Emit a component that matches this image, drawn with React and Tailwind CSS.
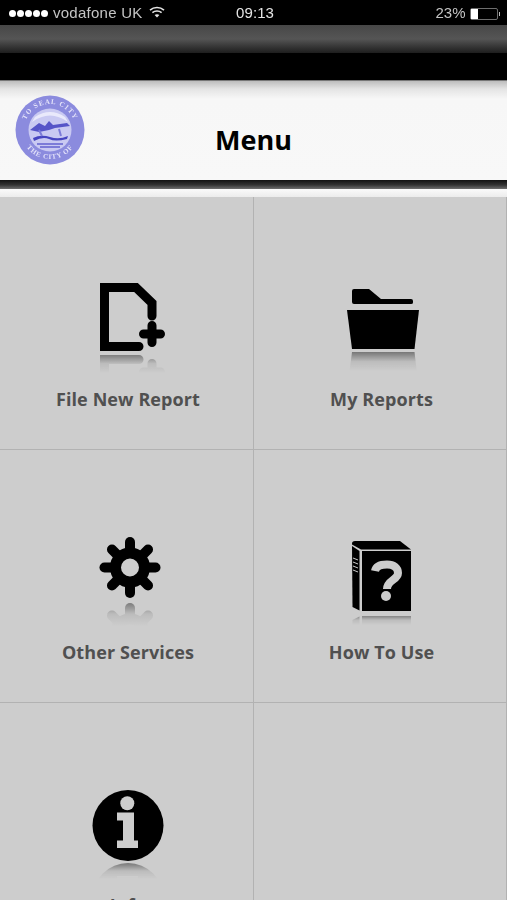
import React from 'react';

const GREY = '#cdcdcd';

// icon plus its faded mirror image below it
function Reflected({ id, axis, from, to, children }) {
  return (
    <svg viewBox="0 0 80 100" className="h-[100px] w-[80px] shrink-0 blur-[0.3px]">
      <defs>
        <linearGradient id={`${id}-grad`} gradientUnits="userSpaceOnUse" x1="0" y1={from} x2="0" y2={to}>
          <stop offset="0" stopColor="#fff" stopOpacity="0.42" />
          <stop offset="0.5" stopColor="#fff" stopOpacity="0.08" />
          <stop offset="1" stopColor="#fff" stopOpacity="0" />
        </linearGradient>
        <mask id={`${id}-mask`} maskUnits="userSpaceOnUse" x="0" y="0" width="80" height="100">
          <rect x="0" y={from} width="80" height={to - from} fill={`url(#${id}-grad)`} />
        </mask>
      </defs>
      <g mask={`url(#${id}-mask)`}>
        <g transform={`translate(0 ${axis * 2}) scale(1 -1)`}>{children}</g>
      </g>
      {children}
    </svg>
  );
}

function FileIcon() {
  return (
    <Reflected id="file" axis={78} from={79} to={98}>
      <path d="M52 71.5H17.5V12.5H49L65 28V41" fill="none" stroke="#000" strokeWidth="9" strokeLinecap="round" strokeLinejoin="miter" />
      <path d="M65 50.5V67.5M56.5 59H73.5" fill="none" stroke="#000" strokeWidth="9" strokeLinecap="round" />
    </Reflected>
  );
}

function FolderIcon() {
  return (
    <Reflected id="folder" axis={75.5} from={77} to={96}>
      <path d="M12 16Q12 14 14 14H29L41 24H71Q73 24 73 26V27.5Q73 29 71 29H14Q12 29 12 27Z" fill="#000" />
      <path d="M7 35H79L74.5 74H12Z" fill="#000" />
    </Reflected>
  );
}

function GearIcon() {
  const spokes = [0, 45, 90, 135, 180, 225, 270, 315];
  return (
    <Reflected id="gear" axis={72.5} from={74} to={98}>
      <circle cx="43" cy="39.5" r="14.5" fill="none" stroke="#000" strokeWidth="11" />
      {spokes.map((a) => (
        <line key={a} x1="43" y1="21" x2="43" y2="14" stroke="#000" strokeWidth="10" strokeLinecap="round" transform={`rotate(${a} 43 39.5)`} />
      ))}
    </Reflected>
  );
}

function BookIcon() {
  return (
    <Reflected id="book" axis={85.5} from={87} to={97}>
      <path d="M12 15.5Q12 13 15 13H60L71 21.5H21L12 16.5Z" fill="#000" />
      <path d="M12 18L19.5 23V82.5L12.5 79Z" fill="#000" />
      <path d="M13 30L18 32M13 34L18 36M13 38L18 40M13 42L18 44" stroke={GREY} strokeWidth="1" />
      <rect x="22" y="23" width="49" height="60" fill="#000" />
      <path d="M35 43C36 38 41 36.5 47 36.5C54 36.5 58 40 58 45C58 52 47 52 47 61" fill="none" stroke={GREY} strokeWidth="8" />
      <circle cx="46" cy="68" r="5" fill={GREY} />
    </Reflected>
  );
}

function InfoIcon() {
  return (
    <Reflected id="info" axis={81} from={82} to={98}>
      <circle cx="41" cy="44.5" r="35.5" fill="#000" />
      <circle cx="40.3" cy="22.3" r="7" fill={GREY} />
      <path d="M30 31.5H47V59.5H51V67H30V59.5H36V39.5H30Z" fill={GREY} />
    </Reflected>
  );
}

function Seal() {
  return (
    <svg viewBox="0 0 70 70" className="h-[70px] w-[70px] blur-[0.7px]">
      <defs>
        <path id="seal-top" d="M9 35A26 26 0 0 1 61 35" />
        <path id="seal-bottom" d="M6 35A29 29 0 0 0 64 35" />
      </defs>
      <circle cx="35" cy="35" r="34.5" fill="#8b8bde" />
      <circle cx="35" cy="35" r="21.5" fill="#c9c9f2" />
      <path d="M17 27Q35 14 53 27L50 22Q35 12 20 22Z" fill="#e9e9fb" />
      <text fontSize="7" fontWeight="700" fill="#e4e3fa" fontFamily='"Liberation Serif", serif' letterSpacing="1">
        <textPath href="#seal-top" startOffset="50%" textAnchor="middle">TO  SEAL  CITY</textPath>
      </text>
      <text fontSize="7" fontWeight="700" fill="#e4e3fa" fontFamily='"Liberation Serif", serif' letterSpacing="0.8">
        <textPath href="#seal-bottom" startOffset="50%" textAnchor="middle">THE CITY OF</textPath>
      </text>
      <path d="M15 35L24 28L30 31L34 26L38 30L52 28L55 31L40 33L34 35L24 37Z" fill="#5654c8" />
      <path d="M18 43Q26 39 35 42T53 41L52 44Q40 47 34 44T19 46Z" fill="#4644c0" />
      <path d="M22 49H48M25 52H45" stroke="#6361cf" strokeWidth="1.6" />
      <path d="M24 35L27 41M44 34L46 41" stroke="#7c7bd8" strokeWidth="2" />
    </svg>
  );
}

function Wifi() {
  return (
    <svg viewBox="0 0 16 12" className="h-[12px] w-[16px]">
      <path d="M1 4.2C5 .6 11 .6 15 4.2" fill="none" stroke="#e5e5e5" strokeWidth="1.6" />
      <path d="M3.4 6.7C6 4.5 10 4.5 12.6 6.7" fill="none" stroke="#e5e5e5" strokeWidth="1.6" />
      <path d="M5.6 9C7 8 9 8 10.4 9L8 11.4Z" fill="#e5e5e5" />
    </svg>
  );
}

function StatusBar() {
  return (
    <div className="relative flex h-[25px] items-center bg-black pt-[2px] pl-[9px] pr-[7px] font-['Liberation_Sans',sans-serif] text-[15px] text-[#c4c4c4] blur-[0.4px]">
      <div className="flex gap-[1px]">
        {[0, 1, 2, 3, 4].map((d) => (
          <span key={d} className="h-[7px] w-[7px] rounded-full bg-white" />
        ))}
      </div>
      <span className="ml-[5px] tracking-[0.25px]">vodafone UK</span>
      <span className="ml-[7px] mb-[3px]"><Wifi /></span>
      <span className="absolute left-[236px] tracking-[0.1px] text-[#e5e5e5]">09:13</span>
      <span className="ml-auto">23%</span>
      <div className="ml-[4px] flex h-[12px] w-[28px] items-center rounded-[2px] border border-[#6e6e6e]">
        <span className="h-[10px] w-[7px] bg-white" />
      </div>
      <span className="ml-[1px] h-[4px] w-[1.5px] bg-[#bbbbbb]" />
    </div>
  );
}

function MenuCell({ icon, label, shift }) {
  return (
    <div className="flex h-[253px] flex-col items-center border-r border-b border-[#b2b2b2] pt-[78px]">
      {icon}
      {label && (
        <span className={`mt-[12px] text-[18px] leading-[24px] font-bold tracking-[0.1px] text-[#505050] ${shift}`}>{label}</span>
      )}
    </div>
  );
}

export default function App() {
  return (
    <div className="h-[900px] overflow-hidden bg-[#cdcdcd] font-['Open_Sans',sans-serif]">
      <StatusBar />
      <div className="h-[28px] bg-gradient-to-b from-[#474747] via-[#555555] to-[#1e1e1e]" />
      <div className="h-[27px] bg-black" />
      <header className="relative flex h-[100px] items-center justify-center border-t border-[#777777] bg-[linear-gradient(to_bottom,#bdbdbd_0px,#e4e4e4_8px,#f7f7f7_18px,#f8f8f8_100%)]">
        <div className="absolute left-[15px] top-[14px]">
          <Seal />
        </div>
        <h1 className="pt-[19px] text-[27px] font-bold text-black">Menu</h1>
      </header>
      <div className="h-[9px] bg-[linear-gradient(to_bottom,#111111,#333333_55%,#6e6e6e)]" />
      <div className="h-[8px] bg-gradient-to-b from-[#fafafa] to-[#ececec]" />
      <div className="grid grid-cols-[254px_253px]">
        <MenuCell icon={<FileIcon />} label="File New Report" shift="ml-[3px]" />
        <MenuCell icon={<FolderIcon />} label="My Reports" shift="ml-[3px]" />
        <MenuCell icon={<GearIcon />} label="Other Services" shift="ml-[3px]" />
        <MenuCell icon={<BookIcon />} label="How To Use" shift="ml-[3px]" />
        <MenuCell icon={<InfoIcon />} label="Info" shift="ml-[3px]" />
        <MenuCell />
      </div>
    </div>
  );
}
